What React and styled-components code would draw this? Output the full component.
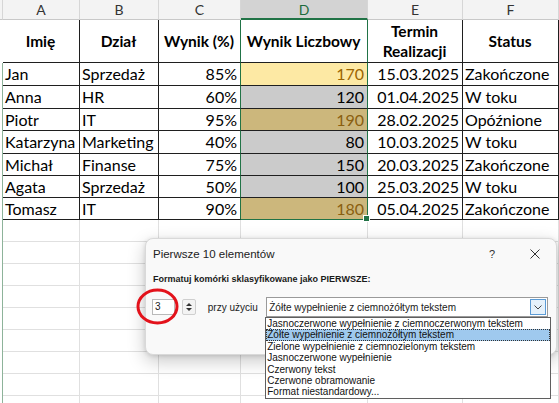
import styled, { createGlobalStyle } from "styled-components";

const GlobalStyle = createGlobalStyle`
  html, body {
    margin: 0;
    padding: 0;
    background: #ffffff;
    overflow: hidden;
  }
`;

const COLS = "3px 77px 79px 82px 127px 95px 96px";
const GREEN = "#217346";

const Sheet = styled.div`
  position: relative;
  width: 559px;
  height: 403px;
  overflow: hidden;
  font-family: Lato, "Liberation Sans", sans-serif;
  color: #000;
`;

const Row = styled.div`
  display: grid;
  grid-template-columns: ${COLS};
  height: ${(p) => p.$h}px;
`;

const LetterCell = styled.div`
  display: flex;
  align-items: center;
  justify-content: center;
  font-size: 14px;
  color: ${(p) => (p.$active ? "#1d6b3c" : "#333")};
  background: ${(p) => (p.$active ? "#d3d3d3" : "#f3f3f3")};
  border-right: 1px solid #d6d6d6;
  border-bottom: ${(p) => (p.$active ? `2px solid ${GREEN}` : "1px solid #c8c8c8")};
  box-sizing: border-box;
`;

const Cell = styled.div`
  position: relative;
  display: flex;
  align-items: center;
  justify-content: ${(p) =>
    p.$align === "right" ? "flex-end" : p.$align === "center" ? "center" : "flex-start"};
  padding: 0 3px 0 2px;
  box-sizing: border-box;
  font-size: ${(p) => (p.$bold ? "15.5px" : "16px")};
  font-weight: ${(p) => (p.$bold ? 700 : 400)};
  text-align: center;
  line-height: 20px;
  white-space: nowrap;
  background: ${(p) => p.$bg || "transparent"};
  color: ${(p) => p.$color || "#000"};
  border-right: 1px solid ${(p) => (p.$edge ? GREEN : p.$line)};
  border-bottom: 1px solid ${(p) => (p.$bottomEdge ? GREEN : p.$line)};
`;

const Gutter = styled.div`
  border-right: 1px solid ${(p) => (p.$show ? "#8db39a" : "transparent")};
  box-sizing: border-box;
`;

const Handle = styled.span`
  position: absolute;
  right: -3px;
  bottom: -3px;
  width: 5px;
  height: 5px;
  background: ${GREEN};
  border: 1px solid #fff;
  z-index: 2;
`;

/* ---------- dialog ---------- */

const Dialog = styled.div`
  position: absolute;
  left: 145px;
  top: 238px;
  width: 412px;
  height: 117px;
  box-sizing: border-box;
  padding: 8px 8px 0 7px;
  background: #f9f9f9;
  border: 1px solid #d9d9d9;
  border-radius: 8px;
  box-shadow: 0 6px 18px rgba(0, 0, 0, 0.22), 0 1px 4px rgba(0, 0, 0, 0.12);
  font-family: "Liberation Sans", Arial, sans-serif;
  font-size: 10px;
  color: #1a1a1a;
  z-index: 5;
`;

const TitleBar = styled.div`
  display: flex;
  align-items: center;
  height: 14px;
  font-size: 11.5px;
  color: #222;
`;

const TitleText = styled.span`
  flex: 1;
`;

const HelpButton = styled.span`
  width: 14px;
  margin-right: 23px;
  text-align: center;
  font-size: 11px;
  color: #333;
`;

const CloseButton = styled.span`
  display: flex;
  align-items: center;
  justify-content: center;
  width: 26px;
`;

const Heading = styled.div`
  margin-top: 11px;
  height: 14px;
  line-height: 14px;
  font-weight: 700;
  font-size: 9px;
  color: #1a1a1a;
`;

const Controls = styled.div`
  display: flex;
  align-items: center;
  margin-top: 11px;
  height: 20px;
`;

const SpinInput = styled.div`
  width: 23px;
  height: 16px;
  box-sizing: border-box;
  background: #fff;
  border: 1px solid #b9b9b9;
  font-size: 10px;
  line-height: 14px;
  padding-left: 2px;
  margin-left: -1px;
`;

const SpinButtons = styled.div`
  display: flex;
  flex-direction: column;
  align-items: center;
  justify-content: center;
  gap: 2px;
  width: 14px;
  height: 16px;
  box-sizing: border-box;
  margin-left: 7px;
  background: #f3f3f3;
  border: 1px solid #cfcfcf;
  border-radius: 2px;
`;

const Arrow = styled.span`
  width: 0;
  height: 0;
  border-left: 3px solid transparent;
  border-right: 3px solid transparent;
  ${(p) => (p.$down ? "border-top: 3px solid #333;" : "border-bottom: 3px solid #333;")}
`;

const UsingLabel = styled.span`
  width: 59px;
  margin-left: 12px;
  color: #222;
`;

const Combo = styled.div`
  position: relative;
  display: flex;
  align-items: center;
  width: 284px;
  height: 20px;
  box-sizing: border-box;
  background: #fff;
  border: 1px solid #9a9a9a;
  padding-left: 2px;
`;

const ComboText = styled.span`
  flex: 1;
`;

const ComboButton = styled.span`
  display: flex;
  align-items: center;
  justify-content: center;
  width: 16px;
  height: 16px;
  margin-right: 1px;
  box-sizing: border-box;
  background: #e5f1fb;
  border: 1px solid #5b9bd5;
`;

const List = styled.div`
  position: absolute;
  top: 19px;
  left: -2px;
  width: 286px;
  box-sizing: border-box;
  background: #fff;
  border: 1px solid #5f5f5f;
  z-index: 6;
`;

const Item = styled.div`
  height: 11.4px;
  line-height: 11.4px;
  padding-left: 1px;
  white-space: nowrap;
  box-sizing: border-box;
  color: #111;
  background: ${(p) => (p.$sel ? "#9fc9ee" : "transparent")};
  outline: ${(p) => (p.$sel ? "1px dotted #333" : "none")};
  outline-offset: -1px;
`;

const Annotation = styled.svg`
  position: absolute;
  left: 134px;
  top: 286px;
  z-index: 8;
  pointer-events: none;
`;

const headers = ["Imię", "Dział", "Wynik (%)", "Wynik Liczbowy", "Termin Realizacji", "Status"];

const Y_BG = "#fde9a4";
const T_BG = "#ccb77c";
const G_BG = "#cbcbcb";
const Y_TXT = "#9c6500";

const rows = [
  ["Jan", "Sprzedaż", "85%", "170", "15.03.2025", "Zakończone", Y_BG, Y_TXT],
  ["Anna", "HR", "60%", "120", "01.04.2025", "W toku", G_BG, "#000"],
  ["Piotr", "IT", "95%", "190", "28.02.2025", "Opóźnione", T_BG, "#8a5f10"],
  ["Katarzyna", "Marketing", "40%", "80", "10.03.2025", "W toku", G_BG, "#000"],
  ["Michał", "Finanse", "75%", "150", "20.03.2025", "Zakończone", G_BG, "#000"],
  ["Agata", "Sprzedaż", "50%", "100", "25.03.2025", "W toku", G_BG, "#000"],
  ["Tomasz", "IT", "90%", "180", "05.04.2025", "Zakończone", T_BG, "#8a5f10"],
];

const rowHeights = [23, 23, 22, 23, 22, 22, 22];

const options = [
  "Jasnoczerwone wypełnienie z ciemnoczerwonym tekstem",
  "Żółte wypełnienie z ciemnożółtym tekstem",
  "Zielone wypełnienie z ciemnozielonym tekstem",
  "Jasnoczerwone wypełnienie",
  "Czerwony tekst",
  "Czerwone obramowanie",
  "Format niestandardowy...",
];

const LINE = "#1f1f1f";
const GRID = "#e0e0e0";

export default function App() {
  return (
    <Sheet>
      <GlobalStyle />
      <Row $h={20}>
        <LetterCell />
        {["A", "B", "C", "D", "E", "F"].map((l) => (
          <LetterCell key={l} $active={l === "D"}>
            {l}
          </LetterCell>
        ))}
      </Row>

      <Row $h={43}>
        <Gutter />
        {headers.map((h, i) => (
          <Cell key={h} $bold $align="center" $line={LINE} $edge={i === 2 || i === 3}>
            {h === "Termin Realizacji" ? (
              <span>
                Termin
                <br />
                Realizacji
              </span>
            ) : (
              h
            )}
          </Cell>
        ))}
      </Row>

      {rows.map((r, ri) => (
        <Row key={r[0]} $h={rowHeights[ri]}>
          <Gutter $show />
          <Cell $line={LINE}>{r[0]}</Cell>
          <Cell $line={LINE}>{r[1]}</Cell>
          <Cell $line={LINE} $align="right" $edge>
            {r[2]}
          </Cell>
          <Cell
            $line={LINE}
            $align="right"
            $edge
            $bg={r[6]}
            $color={r[7]}
            $bottomEdge={ri === rows.length - 1}
          >
            {r[3]}
            {ri === rows.length - 1 && <Handle />}
          </Cell>
          <Cell $line={LINE} $align="right">
            {r[4]}
          </Cell>
          <Cell $line={LINE}>{r[5]}</Cell>
        </Row>
      ))}

      {Array.from({ length: 9 }).map((_, i) => (
        <Row key={i} $h={22}>
          <Gutter $show />
          {Array.from({ length: 6 }).map((__, j) => (
            <Cell key={j} $line={GRID} />
          ))}
        </Row>
      ))}

      <Dialog>
        <TitleBar>
          <TitleText>Pierwsze 10 elementów</TitleText>
          <HelpButton>?</HelpButton>
          <CloseButton>
            <svg width="10" height="10" viewBox="0 0 10 10">
              <path d="M0.5 0.5 L9.5 9.5 M9.5 0.5 L0.5 9.5" stroke="#333" strokeWidth="1" />
            </svg>
          </CloseButton>
        </TitleBar>
        <Heading>Formatuj komórki sklasyfikowane jako PIERWSZE:</Heading>
        <Controls>
          <SpinInput>3</SpinInput>
          <SpinButtons>
            <Arrow />
            <Arrow $down />
          </SpinButtons>
          <UsingLabel>przy użyciu</UsingLabel>
          <Combo>
            <ComboText>Żółte wypełnienie z ciemnożółtym tekstem</ComboText>
            <ComboButton>
              <svg width="8" height="5" viewBox="0 0 8 5">
                <path d="M0.5 0.5 L4 4 L7.5 0.5" fill="none" stroke="#444" strokeWidth="1" />
              </svg>
            </ComboButton>
            <List>
              {options.map((o, i) => (
                <Item key={o} $sel={i === 1}>
                  {o}
                </Item>
              ))}
            </List>
          </Combo>
        </Controls>
      </Dialog>

      <Annotation width="48" height="42" viewBox="0 0 48 42">
        <ellipse cx="23.5" cy="20.5" rx="19.5" ry="16.5" fill="none" stroke="#e3121b" strokeWidth="3" />
      </Annotation>
    </Sheet>
  );
}
